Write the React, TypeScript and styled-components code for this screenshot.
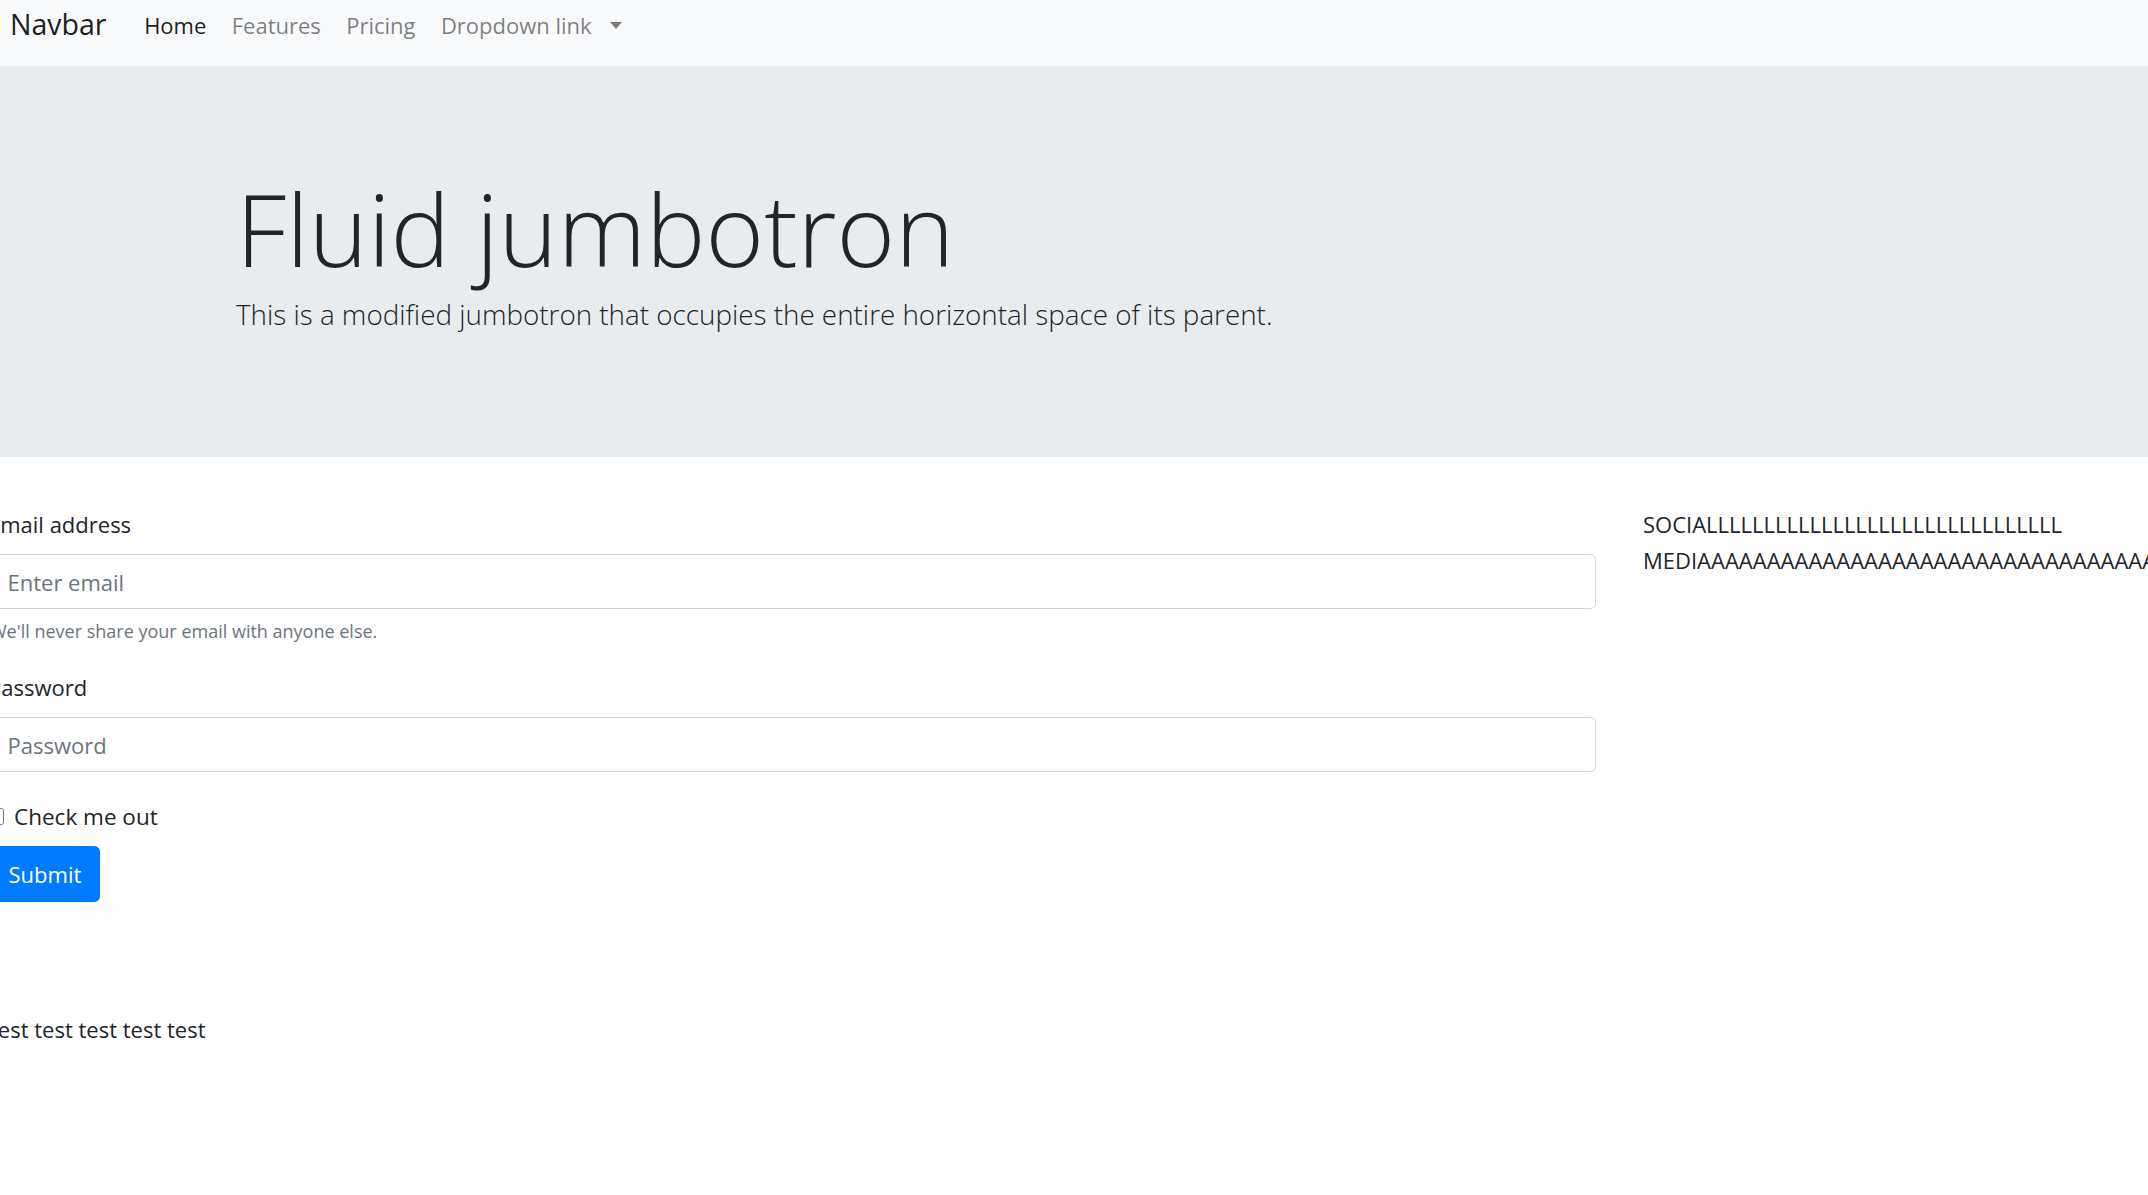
import React from "react";
import styled, { createGlobalStyle } from "styled-components";

const GlobalStyle = createGlobalStyle`
  html, body { margin: 0; padding: 0; background: #fff; overflow: hidden; }
  body {
    font-family: "Open Sans", "Noto Sans", "Liberation Sans", sans-serif;
    color: #212529;
    font-size: 22px;
    line-height: 33px;
  }
  * { box-sizing: border-box; }
`;

const Page = styled.div`
  width: 2148px;
  height: 1195px;
  overflow: hidden;
`;

const Navbar = styled.nav`
  height: 66px;
  background: #f8f9fa;
  display: flex;
  align-items: flex-start;
  padding: 0 10px;
`;

const Brand = styled.a`
  font-size: 28.5px;
  line-height: 41px;
  padding-top: 4px;
  margin-right: 25px;
  color: rgba(0, 0, 0, 0.9);
  text-decoration: none;
`;

const NavList = styled.ul`
  display: flex;
  list-style: none;
  margin: 0;
  padding: 0;
`;

const NavLink = styled.a<{ $active?: boolean }>`
  display: flex;
  align-items: center;
  padding: 9px 12.7px 0;
  font-size: 22px;
  line-height: 33px;
  color: ${(p) => (p.$active ? "rgba(0,0,0,0.9)" : "rgba(0,0,0,0.5)")};
  text-decoration: none;
`;

const Caret = styled.span`
  display: inline-block;
  width: 0;
  height: 0;
  margin-left: 18px;
  border-top: 7px solid currentColor;
  border-left: 6.5px solid transparent;
  border-right: 6.5px solid transparent;
`;

const Jumbotron = styled.section`
  background: #e9ecef;
  height: 391px;
  padding: 102px 0 0 236px;
`;

const Title = styled.h1`
  margin: 0;
  font-weight: 300;
  font-size: 100px;
  line-height: 120px;
  color: #212529;
`;

const Lead = styled.p`
  margin: 6px 0 0;
  font-weight: 300;
  font-size: 27.8px;
  line-height: 41px;
  color: #212529;
`;

const Main = styled.main`
  display: flex;
  align-items: flex-start;
  padding-top: 51px;
  margin-left: -10px;
`;

const FormCol = styled.form`
  flex: none;
  width: 1606px;
  display: flex;
  flex-direction: column;
`;

const FormGroup = styled.div<{ $gap: number }>`
  display: flex;
  flex-direction: column;
  margin-bottom: ${(p) => p.$gap}px;
`;

const Label = styled.label`
  font-size: 22px;
  line-height: 33px;
  margin-bottom: 13px;
  margin-left: -2px;
`;

const Input = styled.input`
  height: 55px;
  width: 100%;
  border: 1px solid #ced4da;
  border-radius: 5.5px;
  padding: 0 16.5px;
  font-family: inherit;
  font-size: 22px;
  color: #495057;
  background: #fff;
  outline: none;
  &::placeholder { color: #6c757d; }
`;

const Help = styled.small`
  margin-top: 9px;
  font-size: 18px;
  line-height: 26.4px;
  color: #6c757d;
`;

const CheckRow = styled.div`
  display: flex;
  align-items: center;
  height: 33px;
  margin-bottom: 13px;
`;

const Checkbox = styled.input`
  width: 17px;
  height: 17px;
  margin: 0 10px 0 -3px;
`;

const CheckLabel = styled.label`
  font-size: 22.5px;
`;

const Button = styled.button`
  align-self: flex-start;
  height: 56px;
  padding: 0 17.5px;
  border: 1px solid #007bff;
  border-radius: 5.5px;
  background: #007bff;
  color: #fff;
  font-family: inherit;
  font-size: 22px;
  line-height: 33px;
`;

const Footer = styled.p`
  margin: 111px 0 0;
  font-size: 22px;
  line-height: 33px;
`;

const Aside = styled.aside`
  margin-left: 47px;
  margin-top: -2px;
  font-size: 22px;
  line-height: 36px;
  white-space: nowrap;
`;

export default function App() {
  return (
    <Page>
      <GlobalStyle />
      <Navbar>
        <Brand href="#">Navbar</Brand>
        <NavList>
          <li><NavLink href="#" $active>Home</NavLink></li>
          <li><NavLink href="#">Features</NavLink></li>
          <li><NavLink href="#">Pricing</NavLink></li>
          <li><NavLink href="#">Dropdown link<Caret /></NavLink></li>
        </NavList>
      </Navbar>
      <Jumbotron>
        <Title>Fluid jumbotron</Title>
        <Lead>This is a modified jumbotron that occupies the entire horizontal space of its parent.</Lead>
      </Jumbotron>
      <Main>
        <FormCol onSubmit={(e) => e.preventDefault()}>
          <FormGroup $gap={26.6}>
            <Label htmlFor="email">Email address</Label>
            <Input id="email" type="email" placeholder="Enter email" />
            <Help>We'll never share your email with anyone else.</Help>
          </FormGroup>
          <FormGroup $gap={28}>
            <Label htmlFor="pw">Password</Label>
            <Input id="pw" type="password" placeholder="Password" />
          </FormGroup>
          <CheckRow>
            <Checkbox type="checkbox" id="check" />
            <CheckLabel htmlFor="check">Check me out</CheckLabel>
          </CheckRow>
          <Button type="submit">Submit</Button>
          <Footer>test test test test test</Footer>
        </FormCol>
        <Aside>
          <div>SOCIALLLLLLLLLLLLLLLLLLLLLLLLLLLLLLL</div>
          <div>MEDIAAAAAAAAAAAAAAAAAAAAAAAAAAAAAAAAA</div>
        </Aside>
      </Main>
    </Page>
  );
}
